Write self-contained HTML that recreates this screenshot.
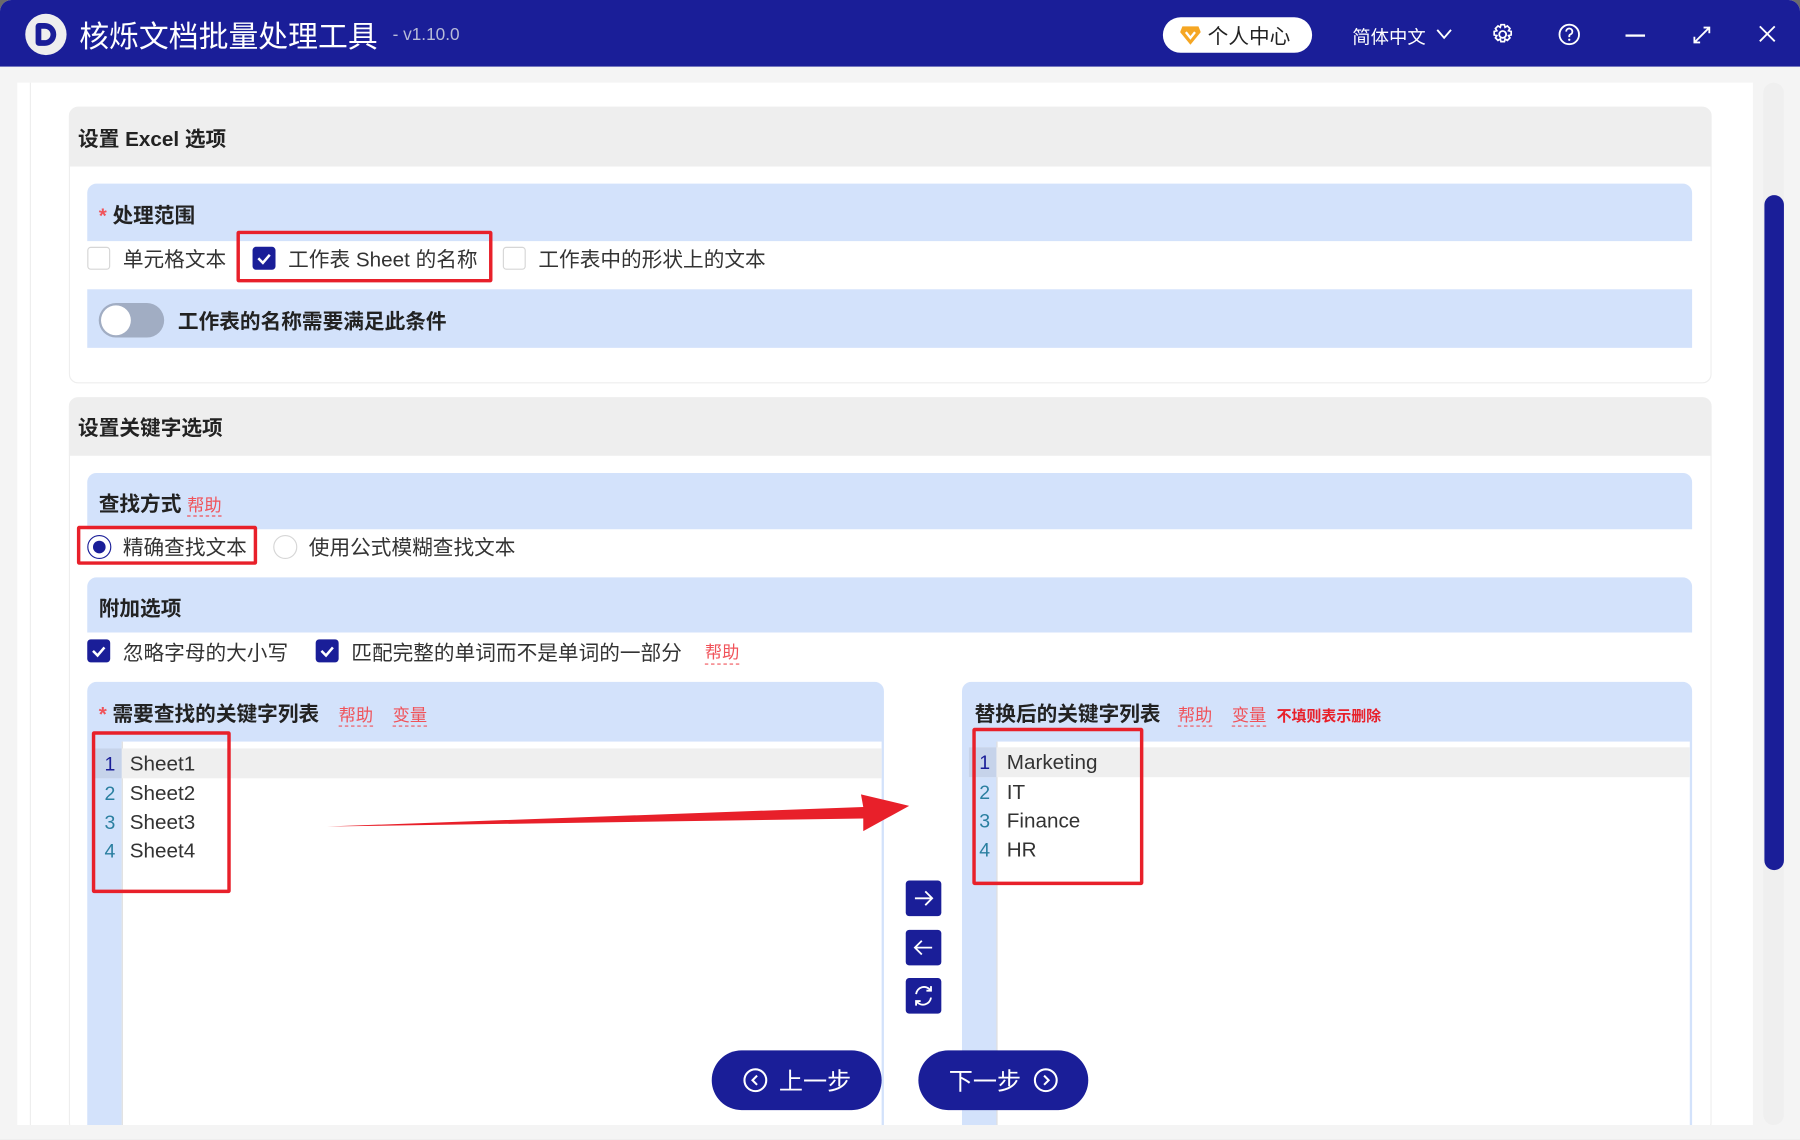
<!DOCTYPE html>
<html><head><meta charset="utf-8"><style>
*{box-sizing:border-box;margin:0;padding:0}
html,body{width:1800px;height:1140px;overflow:hidden;background:#6b6b6b}
#s{position:absolute;left:0;top:0;width:1568px;height:993px;transform:scale(1.147959);transform-origin:0 0;font-family:"Liberation Sans","Noto Sans CJK SC",sans-serif;color:#222;background:#f4f4f4;border-radius:10px 10px 0 0;overflow:hidden}
.a{position:absolute}
.hd{left:0;top:0;width:1568px;height:58px;background:#1a1e98}
.b{font-weight:bold;font-size:18px}
.band{background:#d3e2fb;border-radius:8px 8px 0 0}
.cb{position:absolute;width:20px;height:20px;border:1px solid #d6d6d6;border-radius:3px;background:#fff}
.cb.on{background:#1a1e98;border-color:#1a1e98}
.t{font-size:18px;color:#333}
.link{color:#f0535a;font-size:15px;font-weight:normal;border-bottom:1px dashed #f0535a}
.red{position:absolute;border:3px solid #e8202a;border-radius:2px}
.sq{position:absolute;left:789px;width:31px;height:31px;background:#1a1e98;border-radius:3px}
.pill{position:absolute;top:915px;height:52px;width:148px;background:#1a1e98;border-radius:26px;color:#fff;font-size:21px;display:flex;align-items:center;justify-content:center;gap:10px}
.ln{position:absolute;font-size:17px;color:#2a7fa0}
.tx{position:absolute;font-size:18px;color:#333}
</style></head><body><div id="s">
<div class="a hd"></div>
<div class="a" style="left:22px;top:12px;width:36px;height:36px;border-radius:50%;background:#eee;"></div>
<div class="a" style="left:31px;top:20px;width:18px;height:20px;border:5px solid #1a1e98;border-radius:3px 10px 10px 3px"></div>
<div class="a" style="left:69px;top:12px;color:#fff;font-size:26px">核烁文档批量处理工具</div>
<div class="a" style="left:342px;top:22px;color:#b8bbd8;font-size:15px">- v1.10.0</div>
<div class="a" style="left:1013px;top:15px;width:130px;height:31px;background:#fff;border-radius:16px"></div>
<svg class="a" style="left:1028px;top:22px" width="18" height="17" viewBox="0 0 18 17"><path d="M2 1h14l2 5-9 11L0 6z" fill="#f5a623"/><path d="M5 6l4 5 4-5" stroke="#fff" stroke-width="2" fill="none"/></svg>
<div class="a" style="left:1052px;top:18px;font-size:18px;color:#222">个人中心</div>
<div class="a" style="left:1178px;top:19px;font-size:16px;color:#fff">简体中文</div>
<svg class="a" style="left:1250px;top:24px" width="16" height="12"><path d="M2 2l6 7 6-7" stroke="#fff" stroke-width="1.6" fill="none"/></svg>
<svg class="a" style="left:1299px;top:20px" width="20" height="20" viewBox="0 0 20 20"><circle cx="10" cy="10" r="3" stroke="#fff" stroke-width="1.6" fill="none"/><path d="M8.5 1.5h3l.6 2.3 2-1.2 2.2 2.2-1.2 2 2.3.6v3l-2.3.6 1.2 2-2.2 2.2-2-1.2-.6 2.3h-3l-.6-2.3-2 1.2-2.2-2.2 1.2-2-2.3-.6v-3l2.3-.6-1.2-2 2.2-2.2 2 1.2z" stroke="#fff" stroke-width="1.5" fill="none"/></svg>
<svg class="a" style="left:1357px;top:20px" width="20" height="20"><circle cx="10" cy="10" r="8.5" stroke="#fff" stroke-width="1.6" fill="none"/><path d="M7.3 7.5a2.7 2.7 0 1 1 3.5 2.6c-.6.3-.8.7-.8 1.4v.8" stroke="#fff" stroke-width="1.6" fill="none"/><circle cx="10" cy="14.6" r="1" fill="#fff"/></svg>
<div class="a" style="left:1416px;top:30px;width:17px;height:2px;background:#fff"></div>
<svg class="a" style="left:1474px;top:22px" width="17" height="17"><path d="M2 15L15 2M10 2h5v5M2 10v5h5" stroke="#fff" stroke-width="1.6" fill="none"/></svg>
<svg class="a" style="left:1531px;top:21px" width="17" height="17"><path d="M2 2l13 13M15 2L2 15" stroke="#fff" stroke-width="1.6"/></svg>

<div class="a" style="left:15px;top:72px;width:1512px;height:908px;background:#fff"></div>
<div class="a" style="left:26px;top:72px;width:1px;height:908px;background:#eee"></div>
<div class="a" style="left:1536px;top:72px;width:18px;height:908px;background:#efefef;border-radius:9px"></div>
<div class="a" style="left:1537px;top:170px;width:17px;height:588px;background:#1a1e98;border-radius:9px"></div>

<div class="a" style="left:60px;top:93px;width:1431px;height:241px;border:1px solid #eee;border-radius:8px"></div>
<div class="a" style="left:60px;top:93px;width:1431px;height:52px;background:#eee;border-radius:8px 8px 0 0"></div>
<div class="a b" style="left:68px;top:107px">设置 Excel 选项</div>
<div class="a band" style="left:76px;top:160px;width:1398px;height:50px"></div>
<div class="a b" style="left:86px;top:174px"><span style="color:#f0535a">*</span> 处理范围</div>
<div class="cb" style="left:76px;top:215px"></div><div class="a t" style="left:107px;top:212px">单元格文本</div>
<div class="cb on" style="left:220px;top:215px"><svg width="18" height="18"><path d="M4 9l4 4 6-7" stroke="#fff" stroke-width="2.2" fill="none"/></svg></div>
<div class="a t" style="left:251px;top:212px">工作表 Sheet 的名称</div>
<div class="red" style="left:206px;top:201px;width:223px;height:45px"></div>
<div class="cb" style="left:438px;top:215px"></div><div class="a t" style="left:469px;top:212px">工作表中的形状上的文本</div>
<div class="a" style="left:76px;top:252px;width:1398px;height:51px;background:#d3e2fb"></div>
<div class="a" style="left:86px;top:264px;width:57px;height:30px;background:#a1adc3;border-radius:15px"></div>
<div class="a" style="left:88px;top:266px;width:26px;height:26px;background:#fff;border-radius:50%"></div>
<div class="a b" style="left:155px;top:266px">工作表的名称需要满足此条件</div>

<div class="a" style="left:60px;top:346px;width:1431px;height:640px;border:1px solid #eee;border-radius:8px"></div>
<div class="a" style="left:60px;top:346px;width:1431px;height:51px;background:#eee;border-radius:8px 8px 0 0"></div>
<div class="a b" style="left:68px;top:359px">设置关键字选项</div>
<div class="a band" style="left:76px;top:412px;width:1398px;height:49px"></div>
<div class="a b" style="left:86px;top:425px">查找方式 <span class="link">帮助</span></div>
<div class="a" style="left:76px;top:466px;width:21px;height:21px;border:1px solid #1a1e98;border-radius:50%"></div>
<div class="a" style="left:81px;top:471px;width:11px;height:11px;background:#1a1e98;border-radius:50%"></div>
<div class="a t" style="left:107px;top:463px">精确查找文本</div>
<div class="red" style="left:67px;top:458px;width:157px;height:34px"></div>
<div class="a" style="left:238px;top:466px;width:21px;height:21px;border:1px solid #d6d6d6;border-radius:50%"></div>
<div class="a t" style="left:269px;top:463px">使用公式模糊查找文本</div>
<div class="a band" style="left:76px;top:503px;width:1398px;height:48px"></div>
<div class="a b" style="left:86px;top:516px">附加选项</div>
<div class="cb on" style="left:76px;top:557px"><svg width="18" height="18"><path d="M4 9l4 4 6-7" stroke="#fff" stroke-width="2.2" fill="none"/></svg></div>
<div class="a t" style="left:107px;top:555px">忽略字母的大小写</div>
<div class="cb on" style="left:275px;top:557px"><svg width="18" height="18"><path d="M4 9l4 4 6-7" stroke="#fff" stroke-width="2.2" fill="none"/></svg></div>
<div class="a t" style="left:306px;top:555px">匹配完整的单词而不是单词的一部分</div>
<div class="a link" style="left:614px;top:557px">帮助</div>

<div class="a band" style="left:76px;top:594px;width:694px;height:386px;border-radius:8px 8px 0 0"></div>
<div class="a" style="left:106px;top:646px;width:662px;height:334px;background:#fff;border-left:1px solid #ddd"></div>
<div class="a" style="left:82px;top:652px;width:686px;height:26px;background:#efefef"></div>
<div class="a" style="left:82px;top:652px;width:24px;height:26px;background:#c6d3ea"></div>
<div class="a b" style="left:86px;top:608px"><span style="color:#f0535a">*</span> 需要查找的关键字列表 <span class="link" style="margin-left:12px">帮助</span> <span class="link" style="margin-left:12px">变量</span></div>
<div class="ln" style="left:91px;top:656px;color:#1a1e98">1</div><div class="tx" style="left:113px;top:655px">Sheet1</div>
<div class="ln" style="left:91px;top:682px">2</div><div class="tx" style="left:113px;top:681px">Sheet2</div>
<div class="ln" style="left:91px;top:707px">3</div><div class="tx" style="left:113px;top:706px">Sheet3</div>
<div class="ln" style="left:91px;top:732px">4</div><div class="tx" style="left:113px;top:731px">Sheet4</div>
<div class="red" style="left:80px;top:637px;width:121px;height:141px"></div>

<div class="a band" style="left:838px;top:594px;width:636px;height:386px;border-radius:8px 8px 0 0"></div>
<div class="a" style="left:868px;top:646px;width:604px;height:334px;background:#fff;border-left:1px solid #ddd"></div>
<div class="a" style="left:844px;top:651px;width:628px;height:26px;background:#efefef"></div>
<div class="a" style="left:844px;top:651px;width:24px;height:26px;background:#c6d3ea"></div>
<div class="a b" style="left:849px;top:608px">替换后的关键字列表 <span class="link" style="margin-left:10px">帮助</span> <span class="link" style="margin-left:12px">变量</span> <span style="color:#e8202a;font-size:13px;margin-left:4px">不填则表示删除</span></div>
<div class="ln" style="left:853px;top:655px;color:#1a1e98">1</div><div class="tx" style="left:877px;top:654px">Marketing</div>
<div class="ln" style="left:853px;top:681px">2</div><div class="tx" style="left:877px;top:680px">IT</div>
<div class="ln" style="left:853px;top:706px">3</div><div class="tx" style="left:877px;top:705px">Finance</div>
<div class="ln" style="left:853px;top:731px">4</div><div class="tx" style="left:877px;top:730px">HR</div>
<div class="red" style="left:847px;top:634px;width:149px;height:137px"></div>

<div class="sq" style="top:767px"><svg width="31" height="31"><path d="M8 15.5h15M17 9.5l6 6-6 6" stroke="#fff" stroke-width="1.6" fill="none"/></svg></div>
<div class="sq" style="top:810px"><svg width="31" height="31"><path d="M23 15.5H8M14 9.5l-6 6 6 6" stroke="#fff" stroke-width="1.6" fill="none"/></svg></div>
<div class="sq" style="top:852px"><svg width="31" height="31"><path d="M9 14a7 7 0 0 1 12.5-3.5M22 17a7 7 0 0 1-12.5 3.5" stroke="#fff" stroke-width="1.6" fill="none"/><path d="M22 7v4h-4M9 24v-4h4" stroke="#fff" stroke-width="1.6" fill="none"/></svg></div>

<svg class="a" style="left:0;top:0" width="1568" height="993"><path d="M285 720L752 703L750 692L792 702L752 724L752 713L285 720z" fill="#e8202a"/></svg>

<div class="pill" style="left:620px"><svg width="22" height="22"><circle cx="11" cy="11" r="9.5" stroke="#fff" stroke-width="1.8" fill="none"/><path d="M12.5 7l-4 4 4 4" stroke="#fff" stroke-width="1.8" fill="none"/></svg>上一步</div>
<div class="pill" style="left:800px">下一步<svg width="22" height="22"><circle cx="11" cy="11" r="9.5" stroke="#fff" stroke-width="1.8" fill="none"/><path d="M9.5 7l4 4-4 4" stroke="#fff" stroke-width="1.8" fill="none"/></svg></div>
<div class="a" style="left:0;top:980px;width:1568px;height:13px;background:#f4f4f4"></div>
</div></body></html>
